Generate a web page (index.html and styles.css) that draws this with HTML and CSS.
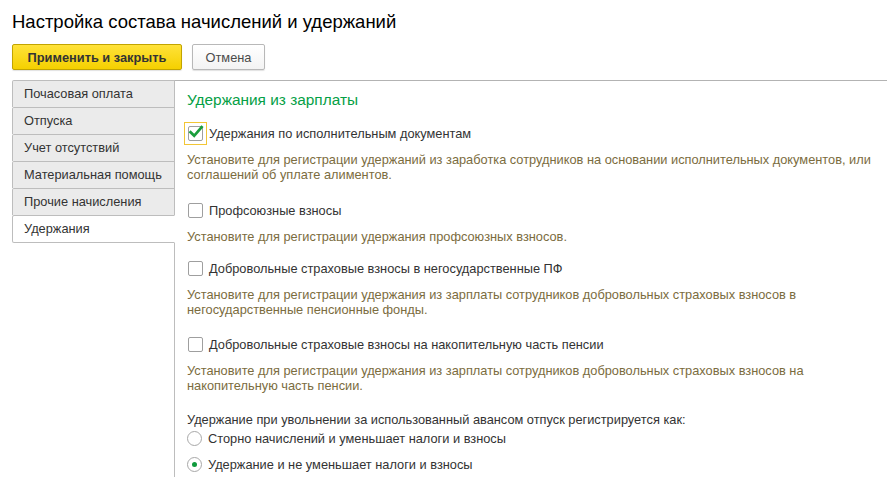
FILE: index.html
```html
<!DOCTYPE html>
<html lang="ru">
<head>
<meta charset="utf-8">
<title>Настройка состава начислений и удержаний</title>
<link rel="stylesheet" href="styles.css">
</head>
<body>
<h1 class="title">Настройка состава начислений и удержаний</h1>
<div class="toolbar">
  <button class="btn btn-primary">Применить и закрыть</button>
  <button class="btn btn-cancel">Отмена</button>
</div>
<div class="main">
  <div class="tabs">
    <div class="tab">Почасовая оплата</div>
    <div class="tab">Отпуска</div>
    <div class="tab">Учет отсутствий</div>
    <div class="tab">Материальная помощь</div>
    <div class="tab">Прочие начисления</div>
    <div class="tab tab-active">Удержания</div>
    <div class="tabs-fill"></div>
  </div>
  <div class="content">
    <div class="heading">Удержания из зарплаты</div>

    <div class="group group-first">
      <div class="row">
        <span class="cb cb-focus"><span class="cb-box">
          <svg viewBox="0 0 16 16" width="16" height="16"><path d="M2.6 8.2 L6.2 11.8 L13.6 3.2" fill="none" stroke="#1a9e3c" stroke-width="2.8" stroke-linecap="square"/></svg>
        </span></span>
        <span class="label">Удержания по исполнительным документам</span>
      </div>
      <div class="desc">Установите для регистрации удержаний из заработка сотрудников на основании исполнительных документов, или<br>соглашений об уплате алиментов.</div>
    </div>

    <div class="group group-2">
      <div class="row">
        <span class="cb"><span class="cb-box"></span></span>
        <span class="label">Профсоюзные взносы</span>
      </div>
      <div class="desc">Установите для регистрации удержания профсоюзных взносов.</div>
    </div>

    <div class="group group-3">
      <div class="row">
        <span class="cb"><span class="cb-box"></span></span>
        <span class="label">Добровольные страховые взносы в негосударственные ПФ</span>
      </div>
      <div class="desc">Установите для регистрации удержания из зарплаты сотрудников добровольных страховых взносов в<br>негосударственные пенсионные фонды.</div>
    </div>

    <div class="group group-4">
      <div class="row">
        <span class="cb"><span class="cb-box"></span></span>
        <span class="label">Добровольные страховые взносы на накопительную часть пенсии</span>
      </div>
      <div class="desc">Установите для регистрации удержания из зарплаты сотрудников добровольных страховых взносов на<br>накопительную часть пенсии.</div>
    </div>

    <div class="question">Удержание при увольнении за использованный авансом отпуск регистрируется как:</div>
    <div class="radio-row">
      <span class="radio"></span>
      <span class="label">Сторно начислений и уменьшает налоги и взносы</span>
    </div>
    <div class="radio-row radio-row-2">
      <span class="radio radio-on"></span>
      <span class="label">Удержание и не уменьшает налоги и взносы</span>
    </div>
  </div>
</div>
</body>
</html>
```

FILE: styles.css
```css
html, body {
  margin: 0;
  padding: 0;
  background: #ffffff;
}
body {
  font-family: "Liberation Sans", Arial, sans-serif;
  color: #333333;
  width: 887px;
  height: 477px;
  overflow: hidden;
}
.title {
  margin: 0;
  padding: 10px 12px 0 12px;
  height: 24px;
  font-size: 18.5px;
  line-height: 24px;
  font-weight: normal;
  color: #000000;
}
.toolbar {
  display: flex;
  gap: 10px;
  padding: 10px 12px 0 12px;
  height: 26px;
}
.btn {
  font-family: "Liberation Sans", Arial, sans-serif;
  font-size: 12.8px;
  height: 26px;
  padding: 0;
  border: 1px solid #b8b8b8;
  border-radius: 2px;
  background: linear-gradient(#ffffff, #f3f3f3);
  color: #404040;
  box-shadow: 0 1px 1px rgba(0,0,0,0.12);
  cursor: default;
}
.btn-primary {
  width: 170px;
  font-weight: bold;
  color: #333333;
  background: linear-gradient(#ffe23a, #f5d000);
  border-color: #c2a400;
}
.btn-cancel {
  width: 73px;
  color: #4a4a4a;
}
.main {
  display: flex;
  margin-top: 10px;
  padding-left: 12px;
  height: 397px;
}
.tabs {
  width: 163px;
  display: flex;
  flex-direction: column;
  flex: none;
}
.tab {
  height: 26px;
  line-height: 26px;
  font-size: 12.8px;
  padding-left: 11px;
  background: #ebebeb;
  border: 1px solid #bdbdbd;
  border-bottom: none;
  border-radius: 2px 0 0 0;
  color: #333333;
}
.tab-active {
  background: #ffffff;
  border-bottom: 1px solid #bdbdbd;
  border-right-color: transparent;
  border-radius: 2px 0 0 2px;
}
.tabs-fill {
  flex: 1;
  border-right: 1px solid #bdbdbd;
}
.content {
  flex: 1;
  border-top: 1px solid #b3b3b3;
  padding: 10px 0 0 12px;
}
.heading {
  font-size: 15.4px;
  line-height: 18px;
  color: #05a046;
}
.group-first {
  margin-top: 13px;
}
.group-2 {
  margin-top: 17px;
}
.group-3 {
  margin-top: 13px;
}
.group-4 {
  margin-top: 16px;
}
.row {
  display: flex;
  align-items: center;
  height: 22px;
}
.cb {
  display: flex;
  align-items: center;
  justify-content: center;
  margin-left: -3px;
  border: 1px solid transparent;
  box-sizing: border-box;
  width: 23px;
  height: 23px;
  flex: none;
}
.cb-focus {
  border-color: #f2c636;
}
.cb-box {
  width: 15px;
  height: 15px;
  border: 1px solid #9f9f9f;
  border-radius: 2px;
  box-sizing: border-box;
  background: #ffffff;
  display: flex;
  align-items: center;
  justify-content: center;
}
.cb-box svg {
  display: block;
  flex: none;
  margin: -2px -1px 0 0;
}
.label {
  font-size: 12.8px;
  color: #333333;
  margin-left: 2px;
  white-space: nowrap;
}
.desc {
  margin-top: 8px;
  font-size: 12.8px;
  line-height: 15px;
  color: #7b6c3e;
  white-space: nowrap;
}
.question {
  margin-top: 19px;
  font-size: 12.8px;
  line-height: 15px;
  color: #333333;
}
.radio-row {
  display: flex;
  align-items: center;
  height: 22px;
}
.radio-row-2 {
  margin-top: 4px;
}
.radio {
  width: 15px;
  height: 15px;
  border: 1px solid #a8a8a8;
  border-radius: 50%;
  box-sizing: border-box;
  background: #ffffff;
  position: relative;
  margin-right: 4px;
  flex: none;
}
.radio-on::after {
  content: "";
  position: absolute;
  left: 4px;
  top: 4px;
  width: 5px;
  height: 5px;
  border-radius: 50%;
  background: #0f9a3c;
}
```
